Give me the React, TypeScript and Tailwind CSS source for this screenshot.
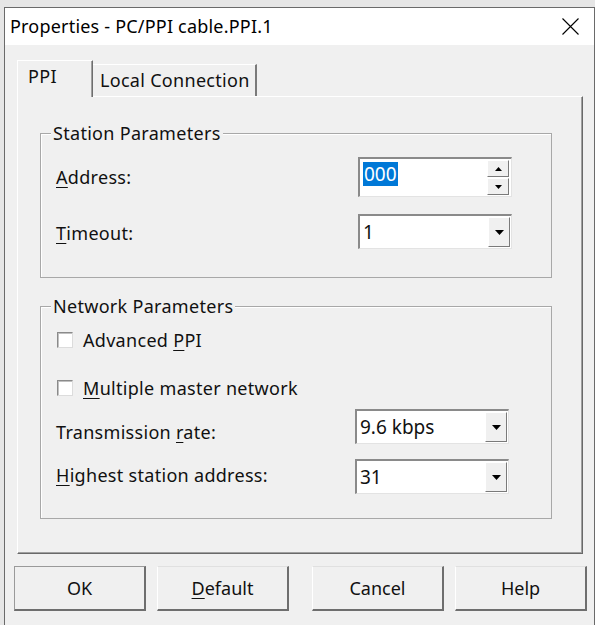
import type { ReactNode } from 'react';

const Key = ({ children }: { children: ReactNode }) => (
  <span className="underline decoration-1 underline-offset-[3px]">{children}</span>
);

const GroupBox = ({
  title,
  className,
  children
}: {
  title: string;
  className: string;
  children: ReactNode;
}) => (
  <div className={`relative border border-[#a8a8a8] shadow-[inset_1px_1px_0_#ffffff] ${className}`}>
    <span className="absolute -top-[13px] left-[10px] bg-[#f0f0f0] px-[2px] leading-[24px]">{title}</span>
    {children}
  </div>
);

const ArrowDown = ({ w = 9, h = 5 }: { w?: number; h?: number }) => (
  <svg width={w} height={h} viewBox={`0 0 ${w} ${h}`}>
    <polygon points={`0,0 ${w},0 ${w / 2},${h}`} fill="#000" />
  </svg>
);

const ArrowUp = ({ w = 7, h = 4 }: { w?: number; h?: number }) => (
  <svg width={w} height={h} viewBox={`0 0 ${w} ${h}`}>
    <polygon points={`0,${h} ${w},${h} ${w / 2},0`} fill="#000" />
  </svg>
);

const ComboBox = ({ value }: { value: string }) => (
  <div className="flex h-[35px] w-[154px] border-l-2 border-t-2 border-b border-r border-l-[#8a8a8a] border-t-[#8a8a8a] border-b-[#e3e3e3] border-r-[#e3e3e3] bg-white">
    <div className="flex flex-1 items-center pl-[3px] text-[19px] tracking-normal">{value}</div>
    <div className="m-[1px] flex w-[22px] items-center justify-center border-l border-t border-white border-b border-r border-b-[#7a7a7a] border-r-[#7a7a7a] bg-[#f0f0f0]">
      <ArrowDown />
    </div>
  </div>
);

const SpinBox = () => (
  <div className="flex h-[40px] w-[154px] border-l-2 border-t-2 border-b border-r border-l-[#8a8a8a] border-t-[#8a8a8a] border-b-[#e3e3e3] border-r-[#e3e3e3] bg-white">
    <div className="flex flex-1 items-start pl-[3px] pt-[3px]">
      <span className="bg-[#0078d7] px-[1px] text-[19px] leading-[24px] tracking-normal text-white">000</span>
    </div>
    <div className="my-[1px] mr-[2px] flex w-[22px] flex-col gap-[1px]">
      <div className="flex flex-1 items-center justify-center border-l border-t border-white border-b border-r border-b-[#7a7a7a] border-r-[#7a7a7a] bg-[#f0f0f0]">
        <ArrowUp />
      </div>
      <div className="flex flex-1 items-center justify-center border-l border-t border-white border-b border-r border-b-[#7a7a7a] border-r-[#7a7a7a] bg-[#f0f0f0]">
        <ArrowDown w={7} h={4} />
      </div>
    </div>
  </div>
);

const CheckBox = ({ children }: { children: ReactNode }) => (
  <div className="flex h-[24px] items-center gap-[10px] pl-[16px]">
    <div className="h-[16px] w-[16px] border-l border-t border-[#8a8a8a] border-b border-r border-b-[#dcdcdc] border-r-[#dcdcdc] bg-white shadow-[inset_1px_1px_0_#c0c0c0]" />
    <span>{children}</span>
  </div>
);

const Button = ({ children, isDefault }: { children: ReactNode; isDefault?: boolean }) => (
  <button
    className={`flex h-[45px] w-[132px] items-center justify-center border-l border-t border-r-2 border-b-2 border-r-[#6e6e6e] border-b-[#6e6e6e] bg-[#f0f0f0] text-[18px] tracking-normal ${
      isDefault ? 'border-l-[#9a9a9a] border-t-[#9a9a9a]' : 'border-l-white border-t-[#e0e0e0]'
    }`}
  >
    {children}
  </button>
);

export default function App() {
  return (
    <div className="h-[625px] w-[595px] overflow-hidden bg-[#e6e6e6] pl-[4px] pt-[7px] font-['Noto_Sans',sans-serif] text-[18px] tracking-[0.3px] text-[#111]">
      <div className="flex h-[618px] w-[591px] flex-col border-l border-t border-r border-[#6a6a6a]">
        <div className="flex h-[37px] items-center justify-between bg-white pl-[5px] pr-[15px]">
          <span className="text-[18px] tracking-[0.2px] text-black">Properties - PC/PPI cable.PPI.1</span>
          <svg width="17" height="17" viewBox="0 0 17 17">
            <path d="M0.5 0.5 L16.5 16.5 M16.5 0.5 L0.5 16.5" stroke="#000" strokeWidth="1.1" />
          </svg>
        </div>

        <div className="flex-1 bg-[#f0f0f0] pt-[15px]">
          <div className="ml-[12px] flex h-[36px] items-end">
            <div className="relative z-10 -mb-[1px] h-[37px] w-[76px] border-l border-t border-white border-r border-r-[#6e6e6e] bg-[#f0f0f0] pl-[10px] pt-[3px] leading-[24px] shadow-[inset_-1px_0_0_#a0a0a0]">
              PPI
            </div>
            <div className="h-[32px] w-[164px] border-t border-white border-r-2 border-r-[#7a7a7a] pl-[7px] pt-[3px] leading-[24px]">
              Local Connection
            </div>
          </div>

          <div className="ml-[12px] h-[458px] w-[566px] border-l border-t border-white border-r border-b border-r-[#696969] border-b-[#696969] pl-[22px] pt-[36px] shadow-[inset_-1px_-1px_0_#a0a0a0]">
            <GroupBox title="Station Parameters" className="h-[145px] w-[512px]">
              <div className="flex flex-col pl-[15px] pr-[39px] pt-[23px]">
                <div className="flex h-[40px] items-center justify-between">
                  <span>
                    <Key>A</Key>ddress:
                  </span>
                  <SpinBox />
                </div>
                <div className="mt-[17px] flex h-[35px] items-center justify-between">
                  <span className="pt-[3px]">
                    <Key>T</Key>imeout:
                  </span>
                  <ComboBox value="1" />
                </div>
              </div>
            </GroupBox>

            <GroupBox title="Network Parameters" className="mt-[28px] h-[213px] w-[512px]">
              <div className="flex flex-col pt-[21px]">
                <CheckBox>
                  Advanced <Key>P</Key>PI
                </CheckBox>
                <div className="mt-[24px]">
                  <CheckBox>
                    <Key>M</Key>ultiple master network
                  </CheckBox>
                </div>
                <div className="mt-[9px] flex h-[35px] items-center justify-between pl-[15px] pr-[42px]">
                  <span className="pt-[12px]">
                    Transmission <Key>r</Key>ate:
                  </span>
                  <ComboBox value="9.6 kbps" />
                </div>
                <div className="mt-[15px] flex h-[35px] items-center justify-between pl-[15px] pr-[42px]">
                  <span className="pb-[2px]">
                    <Key>H</Key>ighest station address:
                  </span>
                  <ComboBox value="31" />
                </div>
              </div>
            </GroupBox>
          </div>

          <div className="ml-[9px] mt-[12px] flex">
            <Button isDefault>OK</Button>
            <div className="ml-[11px]">
              <Button>
                <Key>D</Key>efault
              </Button>
            </div>
            <div className="ml-[23px]">
              <Button>Cancel</Button>
            </div>
            <div className="ml-[11px]">
              <Button>Help</Button>
            </div>
          </div>
        </div>
      </div>
    </div>
  );
}
